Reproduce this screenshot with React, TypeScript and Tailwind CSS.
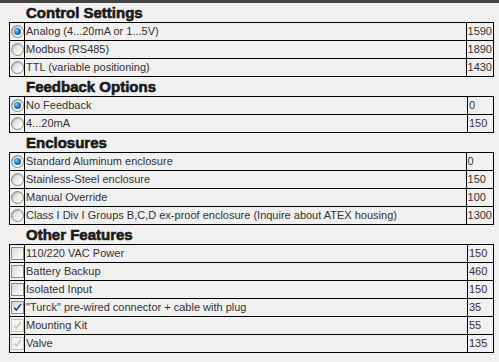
import React from "react";

type Row = { label: string; price: string; checked?: boolean; disabled?: boolean };

const Radio = ({ checked }: { checked?: boolean }) => (
  <span className="inline-flex items-center justify-center w-[13px] h-[13px] rounded-full border border-[#8a8a8a] bg-gradient-to-br from-[#d4d4d4] via-[#ececec] to-white shadow-[inset_1px_1px_1px_rgba(0,0,0,0.15)]">
    {checked && (
      <span className="block w-[7px] h-[7px] rounded-full bg-[radial-gradient(circle_at_35%_35%,#7fd0ff_0%,#1f7fc8_45%,#0b3f7a_100%)]" />
    )}
  </span>
);

const Check = ({ checked, disabled }: { checked?: boolean; disabled?: boolean }) => (
  <span
    className={
      "relative inline-flex items-center justify-center w-[13px] h-[13px] border " +
      (disabled
        ? "border-[#c4c4c4] bg-[#f4f4f4]"
        : "border-[#8a8a8a] bg-gradient-to-br from-[#d8d8d8] via-[#ededed] to-white")
    }
  >
    {checked && (
      <svg width="9" height="9" viewBox="0 0 9 9" className="block">
        <path
          d="M1 4.5 L3.3 7 L8 1"
          fill="none"
          stroke={disabled ? "#c6c6c6" : "#2c3f9e"}
          strokeWidth="1.6"
        />
      </svg>
    )}
  </span>
);

const Section = ({
  title,
  rows,
  type,
}: {
  title: string;
  rows: Row[];
  type: "radio" | "check";
}) => (
  <div>
    <div className="h-[19px] pl-[17px] flex items-end pb-[1px] text-[15px] leading-[17px] font-bold text-[#1a1a1a] [-webkit-text-stroke:0.6px_#1a1a1a]">
      {title}
    </div>
    <table className="border-collapse w-[485px] text-[11px] text-[#333]">
      <tbody>
        {rows.map((r, i) => (
          <tr key={i} className="h-[18px]">
            <td className="w-[15px] border border-black p-0 align-middle">
              <div className="flex items-center justify-center h-[17px]">
                {type === "radio" ? <Radio checked={r.checked} /> : <Check checked={r.checked} disabled={r.disabled} />}
              </div>
            </td>
            <td className="border border-black px-[1px] py-0 whitespace-nowrap">{r.label}</td>
            <td className="w-[26px] border border-black px-[1px] py-0">{r.price}</td>
          </tr>
        ))}
      </tbody>
    </table>
  </div>
);

export default function App() {
  return (
    <div className="w-[499px] h-[362px] bg-[#f0f0f0] overflow-hidden" style={{ fontFamily: '"Liberation Sans", Arial, sans-serif' }}>
      <div className="h-[3px] bg-[#444]" />
      <div className="pl-[9px]">
        <Section
          title="Control Settings"
          type="radio"
          rows={[
            { label: "Analog (4...20mA or 1...5V)", price: "1590", checked: true },
            { label: "Modbus (RS485)", price: "1890" },
            { label: "TTL (variable positioning)", price: "1430" },
          ]}
        />
        <Section
          title="Feedback Options"
          type="radio"
          rows={[
            { label: "No Feedback", price: "0", checked: true },
            { label: "4...20mA", price: "150" },
          ]}
        />
        <Section
          title="Enclosures"
          type="radio"
          rows={[
            { label: "Standard Aluminum enclosure", price: "0", checked: true },
            { label: "Stainless-Steel enclosure", price: "150" },
            { label: "Manual Override", price: "100" },
            { label: "Class I Div I Groups B,C,D ex-proof enclosure (Inquire about ATEX housing)", price: "1300" },
          ]}
        />
        <Section
          title="Other Features"
          type="check"
          rows={[
            { label: "110/220 VAC Power", price: "150" },
            { label: "Battery Backup", price: "460" },
            { label: "Isolated Input", price: "150" },
            { label: "\"Turck\" pre-wired connector + cable with plug", price: "35", checked: true },
            { label: "Mounting Kit", price: "55", checked: true, disabled: true },
            { label: "Valve", price: "135", checked: true, disabled: true },
          ]}
        />
      </div>
    </div>
  );
}
